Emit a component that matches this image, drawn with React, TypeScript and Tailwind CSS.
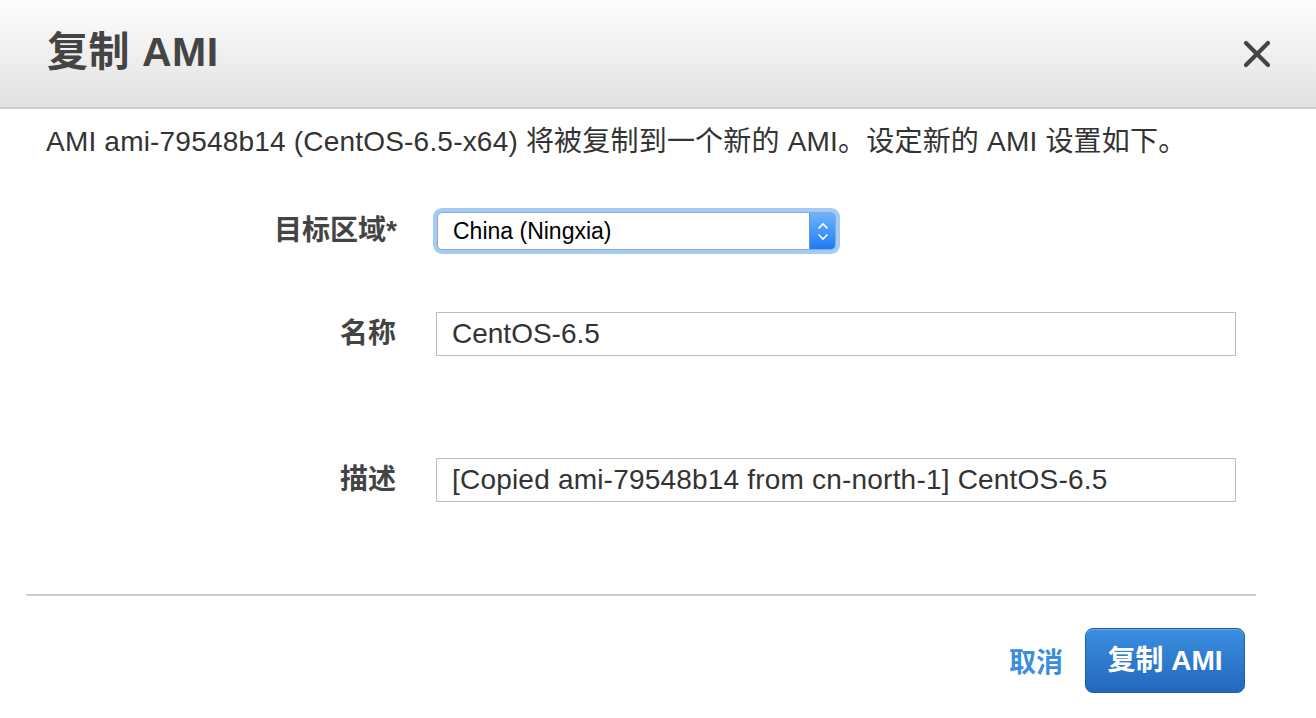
import React, {useState} from 'react';

const font = {fontFamily: '"Liberation Sans", "Noto Sans CJK SC", sans-serif'};

function SelectBox({value}: {value: string}) {
    return (
        <div className="w-[407px] h-[46px] rounded-[9px] bg-[#a3cbf6] p-[4px]">
            <div className="flex h-full items-stretch rounded-[5px] border border-[#8eaacb] bg-white overflow-hidden">
                <div className="flex-1 flex items-center pl-[15px] text-[23px] text-black">{value}</div>
                <div className="w-[26px] flex flex-col items-center justify-center gap-[3px] bg-gradient-to-b from-[#6cb3fa] to-[#1a7cf5] border-l border-[#5a9ae6]">
                    <svg width="12" height="8" viewBox="0 0 12 8">
                        <path d="M1.5 6.5 L6 2 L10.5 6.5" fill="none" stroke="white" strokeWidth="1.6"/>
                    </svg>
                    <svg width="12" height="8" viewBox="0 0 12 8">
                        <path d="M1.5 1.5 L6 6 L10.5 1.5" fill="none" stroke="white" strokeWidth="1.6"/>
                    </svg>
                </div>
            </div>
        </div>
    );
}

export default function App() {
    const [name, setName] = useState('CentOS-6.5');
    const [desc, setDesc] = useState('[Copied ami-79548b14 from cn-north-1] CentOS-6.5');

    return (
        <div style={font} className="w-[1316px] h-[718px] bg-white overflow-hidden">
            <div className="h-[109px] flex items-center justify-between pl-[47px] pr-[45px] bg-gradient-to-b from-[#fdfdfd] to-[#e2e2e2] border-b-2 border-[#cccccc]">
                <h1 className="text-[41px] font-bold text-[#444444] tracking-[0.5px] mb-[1px]">复制 AMI</h1>
                <svg width="28" height="28" viewBox="0 0 28 28">
                    <path d="M3 3 L25 25 M25 3 L3 25" stroke="#444444" strokeWidth="4.2" strokeLinecap="round"/>
                </svg>
            </div>

            <p className="pl-[46px] pt-[17px] text-[28px] leading-[32px] text-[#333333] tracking-[0.2px]">
                AMI ami-79548b14 (CentOS-6.5-x64) 将被复制到一个新的 AMI。设定新的 AMI 设置如下。
            </p>

            <div className="flex flex-col">
                <div className="mt-[50px] flex items-center">
                    <label className="w-[397px] text-right text-[28px] leading-[32px] font-bold text-[#444444]">目标区域*</label>
                    <div className="ml-[36px]">
                        <SelectBox value="China (Ningxia)"/>
                    </div>
                </div>

                <div className="mt-[58px] flex items-center">
                    <label className="w-[397px] text-right text-[28px] leading-[32px] font-bold text-[#444444] pr-[1px]">名称</label>
                    <input
                        value={name}
                        onChange={e => setName(e.target.value)}
                        className="ml-[39px] w-[800px] h-[44px] border border-[#bdbdbd] px-[15px] text-[28px] text-[#333333] outline-none"
                    />
                </div>

                <div className="mt-[102px] flex items-center">
                    <label className="w-[397px] text-right text-[28px] leading-[32px] font-bold text-[#444444] pr-[1px]">描述</label>
                    <input
                        value={desc}
                        onChange={e => setDesc(e.target.value)}
                        className="ml-[39px] w-[800px] h-[44px] border border-[#bdbdbd] px-[15px] text-[28px] text-[#333333] outline-none tracking-[0.2px]"
                    />
                </div>
            </div>

            <div className="mt-[92px] ml-[26px] w-[1230px] h-[2px] bg-[#cccccc]"/>

            <div className="mt-[32px] flex items-center justify-end pr-[71px] gap-[22px]">
                <button className="text-[27px] font-bold text-[#3b8de0] mt-[6px]">取消</button>
                <button className="w-[160px] h-[65px] rounded-[8px] border border-[#1f5faa] bg-gradient-to-b from-[#3b8fe0] to-[#2368bd] text-white text-[28px] font-bold shadow-[inset_0_1px_0_rgba(255,255,255,0.25)]">
                    复制 AMI
                </button>
            </div>
        </div>
    );
}
